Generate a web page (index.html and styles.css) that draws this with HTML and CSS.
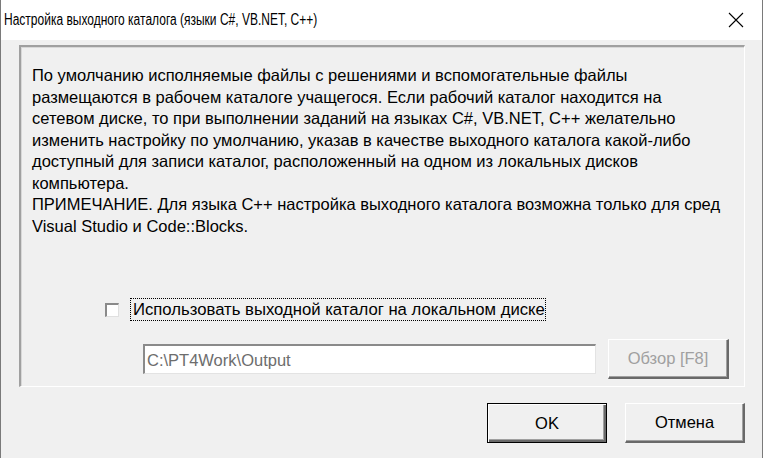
FILE: index.html
```html
<!DOCTYPE html>
<html>
<head>
    <title>Настройка выходного каталога</title>
    <link rel="stylesheet" href="styles.css">
</head>
<body>
    <div class="window">
        <div class="titlebar">
            <span class="title">Настройка выходного каталога (языки C#, VB.NET, C++)</span>
            <span class="close">
                <svg width="16" height="16" viewBox="0 0 16 16">
                    <path d="M1 1 L15 15 M15 1 L1 15" stroke="#000" stroke-width="1.1" fill="none"/>
                </svg>
            </span>
        </div>
        <div class="client">
            <div class="panel">
                <p class="info">По умолчанию исполняемые файлы с решениями и вспомогательные файлы<br>
                размещаются в рабочем каталоге учащегося. Если рабочий каталог находится на<br>
                сетевом диске, то при выполнении заданий на языках C#, VB.NET, C++ желательно<br>
                изменить настройку по умолчанию, указав в качестве выходного каталога какой-либо<br>
                доступный для записи каталог, расположенный на одном из локальных дисков<br>
                компьютера.<br>
                ПРИМЕЧАНИЕ. Для языка C++ настройка выходного каталога возможна только для сред<br>
                Visual Studio и Code::Blocks.</p>
                <div class="check-row">
                    <span class="checkbox"></span>
                    <span class="check-label">Использовать выходной каталог на локальном диске</span>
                </div>
                <div class="path-row">
                    <div class="path-input">C:\PT4Work\Output</div>
                    <div class="btn btn-disabled">Обзор [F8]</div>
                </div>
            </div>
            <div class="footer">
                <div class="btn btn-default">OK</div>
                <div class="btn">Отмена</div>
            </div>
        </div>
    </div>
</body>
</html>
```

FILE: styles.css
```css
* {
    box-sizing: border-box;
}

body {
    margin: 0;
    font-family: "Liberation Sans", Arial, sans-serif;
    background: #f0f0f0;
}

.window {
    width: 763px;
    height: 458px;
    display: flex;
    flex-direction: column;
    border-left: 1px solid #7a7a7a;
    border-right: 1px solid #7a7a7a;
    background: #f0f0f0;
}

.titlebar {
    height: 40px;
    background: #fff;
    display: flex;
    align-items: center;
    justify-content: space-between;
    padding-left: 3px;
}

.title {
    font-size: 16px;
    color: #000;
    white-space: nowrap;
    display: inline-block;
    transform: scaleX(0.75);
    transform-origin: left center;
}

.close {
    width: 46px;
    display: flex;
    justify-content: center;
    margin-right: 3px;
}

.client {
    flex: 1;
    padding: 5px 17px 0 18px;
    display: flex;
    flex-direction: column;
}

.panel {
    height: 342px;
    flex-shrink: 0;
    border-top: 2px solid #a0a0a0;
    border-left: 2px solid #a0a0a0;
    border-right: 1px solid #fff;
    border-bottom: 1px solid #fff;
    box-shadow: inset 1px 1px 0 #d8d8d8;
    padding: 18px 0 0 11px;
    display: flex;
    flex-direction: column;
}

.info {
    margin: 0;
    font-size: 16.5px;
    line-height: 21.5px;
    white-space: nowrap;
    color: #000;
}

.check-row {
    display: flex;
    align-items: center;
    margin-top: 61px;
    margin-left: 73px;
}

.checkbox {
    width: 14px;
    height: 14px;
    background: #fff;
    border-top: 2px solid #8a8a8a;
    border-left: 2px solid #8a8a8a;
    border-right: 1px solid #e0e0e0;
    border-bottom: 1px solid #e0e0e0;
}

.check-label {
    margin-left: 11px;
    font-size: 16.7px;
    line-height: 19px;
    padding: 1px 0 1px 2px;
    border: 1px dotted #000;
    color: #000;
}

.path-row {
    display: flex;
    align-items: center;
    margin-top: 18px;
    margin-left: 111px;
}

.path-input {
    width: 453px;
    height: 30px;
    background: #fff;
    border-top: 2px solid #8a8a8a;
    border-left: 2px solid #8a8a8a;
    border-right: 1px solid #e3e3e3;
    border-bottom: 1px solid #e3e3e3;
    color: #6d6d6d;
    font-size: 16.5px;
    line-height: 24px;
    padding: 2px 2px;
}

.btn {
    width: 120px;
    height: 40px;
    display: flex;
    align-items: center;
    justify-content: center;
    font-size: 16.5px;
    color: #000;
    background: #f0f0f0;
    border-top: 1px solid #fff;
    border-left: 1px solid #fff;
    border-right: 2px solid #696969;
    border-bottom: 2px solid #696969;
    box-shadow: inset -1px -1px 0 #a0a0a0;
}

.btn-disabled {
    width: 121px;
    margin-left: 12px;
    color: #a0a0a0;
}

.btn-default {
    border: 1px solid #000;
    box-shadow: inset 1px 1px 0 #fff, inset -2px -2px 0 #696969, inset -3px -3px 0 #a0a0a0;
}

.footer {
    display: flex;
    justify-content: flex-end;
    gap: 18px;
    margin-top: 16px;
}
```
